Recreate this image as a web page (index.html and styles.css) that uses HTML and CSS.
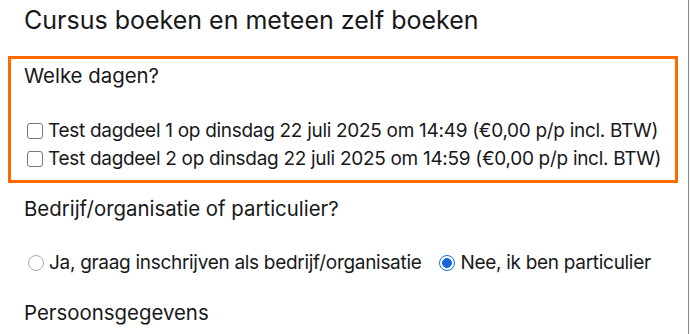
FILE: index.html
```html
<!DOCTYPE html>
<html lang="nl">
<head>
<meta charset="utf-8">
<title>Cursus boeken</title>
<link rel="stylesheet" href="styles.css">
</head>
<body>
<div class="page">
  <h1 class="title">Cursus boeken en meteen zelf boeken</h1>
  <fieldset class="days">
    <div class="label">Welke dagen?</div>
    <div class="options">
      <label class="opt"><input type="checkbox" class="check"><span>Test dagdeel 1 op dinsdag 22 juli 2025 om 14:49 (€0,00 p/p incl. BTW)</span></label>
      <label class="opt"><input type="checkbox" class="check"><span>Test dagdeel 2 op dinsdag 22 juli 2025 om 14:59 (€0,00 p/p incl. BTW)</span></label>
    </div>
  </fieldset>
  <div class="field">
    <div class="label">Bedrijf/organisatie of particulier?</div>
    <div class="radios">
      <label class="opt"><input type="radio" name="type" class="radio"><span>Ja, graag inschrijven als bedrijf/organisatie</span></label>
      <label class="opt"><input type="radio" name="type" class="radio" checked><span>Nee, ik ben particulier</span></label>
    </div>
  </div>
  <div class="label section">Persoonsgegevens</div>
</div>
</body>
</html>
```

FILE: styles.css
```css
html, body {
  margin: 0;
  padding: 0;
  background: #fff;
}
body {
  font-family: Inter, "Noto Sans", sans-serif;
  color: #18181a;
}
.page {
  width: 689px;
  height: 334px;
  box-sizing: border-box;
  border-right: 1px solid #8a8a8a;
  padding: 5px 10px 0 8px;
  overflow: hidden;
}
.title {
  margin: 0 0 21px 16px;
  font-size: 25px;
  line-height: 30px;
  font-weight: 400;
}
.days {
  margin: 0;
  border: 3px solid #ff6a00;
  padding: 5px 13px 7px 13px;
  min-width: 0;
}
.label {
  font-size: 20.4px;
  line-height: 24px;
}
.options {
  margin-top: 29px;
  display: flex;
  flex-direction: column;
}
.opt {
  display: flex;
  align-items: center;
  font-size: 19px;
  letter-spacing: -0.3px;
  line-height: 28px;
  white-space: nowrap;
}
.check, .radio {
  appearance: none;
  -webkit-appearance: none;
  display: block;
  width: 16px;
  height: 16px;
  min-width: 16px;
  box-sizing: border-box;
  background: #fff;
  flex: none;
  padding: 0;
}
.check {
  margin: 0 5px 0 3px;
  border: 1.2px solid #777;
  border-radius: 3px;
}
.radio {
  border: 1.2px solid #aaa;
  border-radius: 50%;
  margin: 0 5px 0 4px;
}
.radio:checked {
  border: 1.2px solid #1a6fe0;
  background: radial-gradient(circle, #1668dc 0 4.6px, #fff 5.2px);
}
.field {
  margin: 14px 0 0 16px;
}
.radios {
  margin-top: 28px;
  display: flex;
  gap: 14px;
}
.section {
  margin: 24px 0 0 16px;
}
```
